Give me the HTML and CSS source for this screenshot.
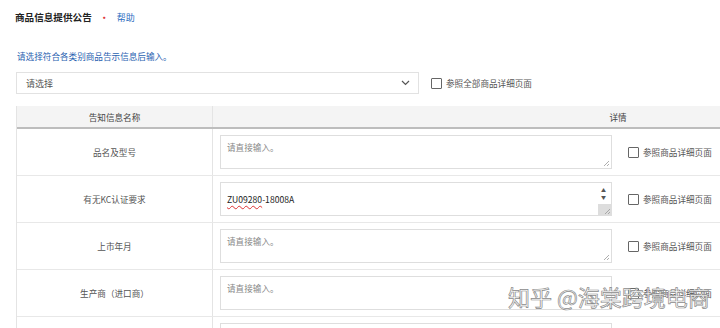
FILE: index.html
```html
<!DOCTYPE html>
<html lang="zh">
<head>
<meta charset="utf-8">
<link rel="stylesheet" href="styles.css">
</head>
<body>
<div class="page">
  <div class="head">
    <span class="title">商品信息提供公告</span>
    <span class="dot">•</span>
    <a class="help">帮助</a>
  </div>
  <div class="tip">请选择符合各类别商品告示信息后输入。</div>
  <div class="select-row">
    <div class="select">
      <span>请选择</span>
      <svg class="arrow" width="9" height="6" viewBox="0 0 9 6"><path d="M1 1 L4.5 4.5 L8 1" fill="none" stroke="#555" stroke-width="1.2"/></svg>
    </div>
    <label class="chk"><span class="box"></span><span>参照全部商品详细页面</span></label>
  </div>
  <div class="table">
    <div class="row thead">
      <div class="c1">告知信息名称</div>
      <div class="c2">详情</div>
    </div>
    <div class="row">
      <div class="c1">品名及型号</div>
      <div class="c2">
        <div class="ta"><span class="ph">请直接输入。</span><svg class="grip" width="8" height="8" viewBox="0 0 8 8"><path d="M7 2 L2 7 M7 5 L5 7" stroke="#999" stroke-width="0.8"/></svg></div>
        <label class="chk"><span class="box"></span><span>参照商品详细页面</span></label>
      </div>
    </div>
    <div class="row">
      <div class="c1">有无KC认证要求</div>
      <div class="c2">
        <div class="ta val"><span><span class="typo">ZU09280</span>-18008A</span>
          <span class="spin"><i>▲</i><i>▼</i></span>
          <span class="corner"><svg width="8" height="8" viewBox="0 0 8 8"><path d="M7 2 L2 7 M7 5 L5 7" stroke="#999" stroke-width="0.8"/></svg></span>
        </div>
        <label class="chk"><span class="box"></span><span>参照商品详细页面</span></label>
      </div>
    </div>
    <div class="row">
      <div class="c1">上市年月</div>
      <div class="c2">
        <div class="ta"><span class="ph">请直接输入。</span><svg class="grip" width="8" height="8" viewBox="0 0 8 8"><path d="M7 2 L2 7 M7 5 L5 7" stroke="#999" stroke-width="0.8"/></svg></div>
        <label class="chk"><span class="box"></span><span>参照商品详细页面</span></label>
      </div>
    </div>
    <div class="row">
      <div class="c1">生产商（进口商）</div>
      <div class="c2">
        <div class="ta"><span class="ph">请直接输入。</span><svg class="grip" width="8" height="8" viewBox="0 0 8 8"><path d="M7 2 L2 7 M7 5 L5 7" stroke="#999" stroke-width="0.8"/></svg></div>
        <label class="chk"><span class="box"></span><span>参照商品详细页面</span></label>
      </div>
    </div>
    <div class="row">
      <div class="c1"></div>
      <div class="c2">
        <div class="ta"></div>
      </div>
    </div>
  </div>
  <div class="watermark">知乎 @海棠跨境电商</div>
</div>
</body>
</html>
```
FILE: styles.css
```css
html, body {
  margin: 0;
  padding: 0;
  background: #fff;
  overflow: hidden;
}
.page {
  position: relative;
  width: 720px;
  height: 328px;
  overflow: hidden;
  font-family: "Noto Sans CJK SC", "Noto Sans", sans-serif;
  font-size: 8.6px;
  color: #555;
}
.head {
  display: flex;
  align-items: center;
  padding: 9px 0 0 15px;
  height: 16px;
}
.title {
  font-size: 9.6px;
  font-weight: bold;
  color: #222;
}
.dot {
  color: #e0383c;
  font-size: 11px;
  margin-left: 7px;
}
.help {
  color: #2a6cc0;
  margin-left: 7px;
  font-size: 9px;
}
.tip {
  color: #2a62b0;
  padding: 24px 0 0 17px;
  height: 14px;
  line-height: 14px;
}
.select-row {
  display: flex;
  align-items: center;
  margin-top: 9px;
  padding-left: 16px;
}
.select {
  width: 384px;
  height: 20px;
  border: 1px solid #e2e2e2;
  display: flex;
  align-items: center;
  justify-content: space-between;
  padding: 0 8px 0 9px;
  box-sizing: content-box;
  color: #555;
  font-size: 9px;
}
.chk {
  display: flex;
  align-items: center;
  color: #555;
  white-space: nowrap;
}
.select-row .chk { margin-left: 12px; }
.box {
  width: 9px;
  height: 9px;
  border: 1px solid #666;
  border-radius: 1px;
  margin-right: 4px;
  background: #fff;
}
.table {
  margin: 12px 0 0 16px;
  width: 1006px;
  border-left: 1px solid #e4e4e4;
}
.row {
  display: flex;
  border-bottom: 1px solid #e8e8e8;
}
.thead {
  background: #f4f4f4;
  height: 21px;
  border-bottom: 2px solid #bdbdbd;
  color: #444;
}
.c1 {
  width: 195px;
  border-right: 1px solid #e4e4e4;
  display: flex;
  align-items: center;
  justify-content: center;
}
.c2 {
  flex: 1;
  display: flex;
  align-items: center;
  padding: 6px 7px;
}
.thead .c2 {
  justify-content: center;
  padding: 0;
}
.ta {
  position: relative;
  width: 378px;
  border: 1px solid #dedede;
  padding: 5px 6px 0;
  display: flex;
  align-items: flex-start;
  box-sizing: content-box;
  height: 27px;
}
.ph { color: #888; }
.val { align-items: center; padding-top: 0; height: 32px; color: #222; }
.typo {
  text-decoration: underline wavy #d33;
  text-decoration-thickness: 1px;
  text-underline-offset: 2px;
}
.grip {
  position: absolute;
  right: 1px;
  bottom: 1px;
}
.spin {
  position: absolute;
  right: 5px;
  top: 3px;
  display: flex;
  flex-direction: column;
  font-size: 5px;
  line-height: 7px;
  color: #555;
}
.spin i { font-style: normal; }
.corner {
  position: absolute;
  right: 0;
  bottom: 0;
  width: 13px;
  height: 11px;
  background: #ddd;
  display: flex;
  align-items: flex-end;
  justify-content: flex-end;
}
.c2 .chk { margin-left: 16px; }
.watermark {
  position: absolute;
  left: 508px;
  top: 280px;
  font-size: 22px;
  color: rgba(255,255,255,0.9);
  -webkit-text-stroke: 0.7px #8a8a8a;
  white-space: nowrap;
}
```
